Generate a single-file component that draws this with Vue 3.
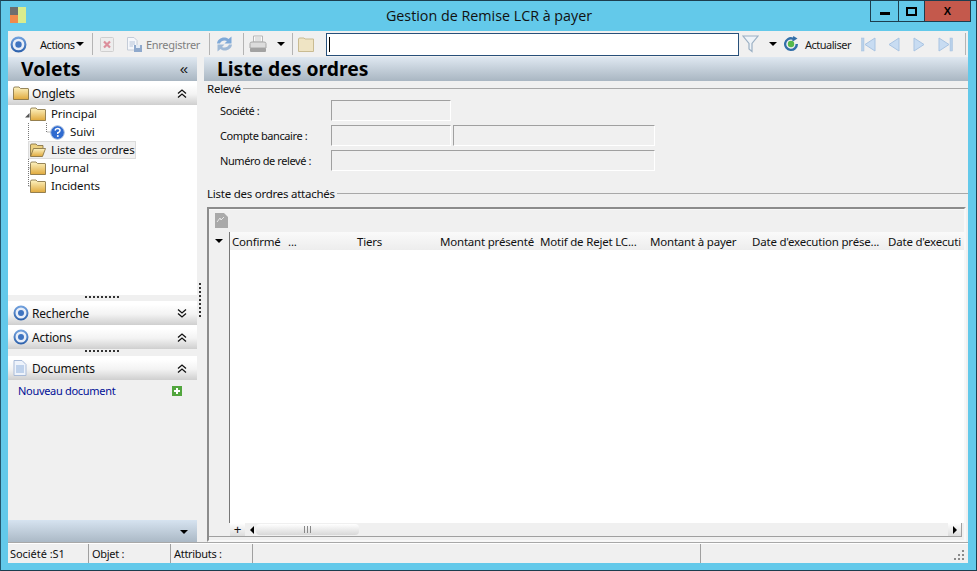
<script setup>
const headers = [
  { t: 'Confirmé', w: 54 }, { t: '...', w: 67 }, { t: 'Tiers', w: 81 },
  { t: 'Montant présenté', w: 98 }, { t: 'Motif de Rejet LC...', w: 108 },
  { t: 'Montant à payer', w: 100 }, { t: "Date d'execution prése...", w: 134 }, { t: "Date d'executi", w: 80 }
]
</script>

<template>
  <div class="window">
    <svg width="0" height="0" class="defs">
      <defs>
        <linearGradient id="fold" x1="0" y1="0" x2="0" y2="1"><stop offset="0" stop-color="#fdf3c2"/><stop offset="1" stop-color="#e0a93c"/></linearGradient>
        <linearGradient id="ring" x1="0" y1="0" x2="0" y2="1"><stop offset="0" stop-color="#6f9fdc"/><stop offset="1" stop-color="#2f63ad"/></linearGradient>
        <symbol id="folder" viewBox="0 0 16 14"><path d="M.5 2.500Q.5 1 2 1H6L7.500 2.500H15Q15.500 2.500 15.500 3V13.500H.5Z" fill="url(#fold)" stroke="#7d6a3a" stroke-width=".8"/></symbol>
        <symbol id="open" viewBox="0 0 16 14"><path d="M.5 13V2Q.5 1 2 1H6L7.500 2.500H13V5" fill="#ecd080" stroke="#7d6a3a" stroke-width=".8"/><path d="M.5 13.500L3.500 5.500H15.500L12.500 13.500Z" fill="url(#fold)" stroke="#7d6a3a" stroke-width=".8"/></symbol>
        <symbol id="target" viewBox="0 0 16 16"><circle cx="8" cy="8" r="6.500" fill="#e8eef8" stroke="url(#ring)" stroke-width="2"/><circle cx="8" cy="8" r="3" fill="#3f74c0"/></symbol>
      </defs>
    </svg>

    <header class="titlebar">
      <svg class="logo" width="17" height="16" viewBox="0 0 17 16"><rect width="8" height="8" fill="#6e6e6e"/><rect y="8" width="8" height="8" fill="#f08a4b"/><rect x="8" width="8" height="16" fill="#d9ec8d"/></svg>
      <span class="title">Gestion de Remise LCR à payer</span>
      <div class="controls">
        <div class="ctl min"><i></i></div>
        <div class="ctl max"><i></i></div>
        <div class="ctl close">X</div>
      </div>
    </header>

    <div class="frame">
      <div class="toolbar">
        <svg class="t-target" width="17" height="17"><use href="#target"/></svg>
        <span class="t-actions">Actions</span><span class="caret c1"></span>
        <span class="sep s1"></span>
        <svg class="t-del" width="14" height="15" viewBox="0 0 14 15"><rect x=".5" y=".5" width="13" height="14" rx="1" fill="#ededed" stroke="#cfcfcf"/><path d="M4 4.500L10 10.500M10 4.500L4 10.500" stroke="#dc8f9c" stroke-width="2.200"/></svg>
        <svg class="t-save" width="17" height="17" viewBox="0 0 17 17"><path d="M1.500 1.500H8L11 4.500V14H1.500Z" fill="#f5f7fb" stroke="#c4ccd8"/><path d="M3.500 6H9M3.500 8H9M3.500 10H7" stroke="#b5c3d8"/><rect x="8" y="9" width="8" height="7" fill="#8fa9cc"/><rect x="10" y="9" width="4" height="3" fill="#e3ebf5"/></svg>
        <span class="t-label gray">Enregistrer</span>
        <span class="sep s2"></span>
        <svg class="t-sync" width="17" height="18" viewBox="0 0 17 18"><path d="M1 8.500C1.500 3.500 8 .5 12.500 4L15.500 1.500V8.500H8.500L11 6C8 4.500 5 6 4 8.500Z" fill="#7fa9d8"/><path d="M16 9.500C15.500 14.500 9 17.500 4.500 14L1.500 16.500V9.500H8.500L6 12C9 13.500 12 12 13 9.500Z" fill="#9fb9d6"/></svg>
        <span class="sep s3"></span>
        <svg class="t-print" width="18" height="18" viewBox="0 0 18 18"><path d="M4.500 1H13.500V7H4.500Z" fill="#fafafa" stroke="#b5b5b5"/><path d="M6 3H12M6 5H12" stroke="#c8c8c8"/><path d="M1 8.500Q1 7 3 7H15Q17 7 17 8.500V13H1Z" fill="#dcdcdc" stroke="#a8a8a8"/><rect x="1" y="13" width="16" height="4" rx="1" fill="#a2a2a2"/></svg>
        <span class="caret c2"></span>
        <span class="sep s4"></span>
        <svg class="t-folder" width="16" height="15" viewBox="0 0 16 15"><path d="M.5 2Q.5 1 2 1H6L7 2H15.500V14.500H.5Z" fill="#efe4c4" stroke="#c9bb92"/></svg>
        <div class="search"><span class="cursor"></span></div>
        <svg class="t-filter" width="17" height="18" viewBox="0 0 17 18"><path d="M1 1H16L10 8.500V16.500L7 14V8.500Z" fill="#eef3f8" stroke="#9bb0c4" stroke-width="1.200"/></svg>
        <span class="caret c3"></span>
        <svg class="t-refresh" width="16" height="16" viewBox="0 0 16 16"><path d="M10 1.400A7 7 0 1 0 15 8H12.500A4.600 4.600 0 1 1 9.500 3.800L9 6L14.500 2.500L10.300 0Z" fill="#326fa8"/><circle cx="8" cy="8" r="3.200" fill="#55b84a"/></svg>
        <span class="t-label refresh">Actualiser</span>
        <svg class="nav n1" width="15" height="15" viewBox="0 0 15 15"><rect x=".5" y="1" width="2.500" height="13" fill="#b8d0ea" stroke="#a3c0de" stroke-width=".5"/><path d="M14 1V14L4 7.500Z" fill="#c8dcf2" stroke="#a9c4e2"/></svg>
        <svg class="nav n2" width="12" height="15" viewBox="0 0 12 15"><path d="M11 1V14L1 7.500Z" fill="#c8dcf2" stroke="#a9c4e2"/></svg>
        <svg class="nav n3" width="12" height="15" viewBox="0 0 12 15"><path d="M1 1V14L11 7.500Z" fill="#c8dcf2" stroke="#a9c4e2"/></svg>
        <svg class="nav n4" width="15" height="15" viewBox="0 0 15 15"><rect x="12" y="1" width="2.500" height="13" fill="#b8d0ea" stroke="#a3c0de" stroke-width=".5"/><path d="M1 1V14L11 7.500Z" fill="#c8dcf2" stroke="#a9c4e2"/></svg>
        <span class="sep s5"></span>
      </div>

      <div class="main">
        <aside class="side">
          <div class="band volets"><b>Volets</b><span class="chev">«</span></div>
          <div class="head">
            <svg width="16" height="14"><use href="#folder"/></svg><span>Onglets</span>
            <svg class="dbl" width="10" height="9" viewBox="0 0 10 9"><path d="M1 4.500L5 1L9 4.500M1 8.500L5 5L9 8.500" fill="none" stroke="#111" stroke-width="1.300"/></svg>
          </div>
          <div class="tree">
            <svg class="lines" width="60" height="90"><path d="M20.500 18V81M20.500 45H30M20.500 63H30M20.500 81H30M38.500 18V27H50M24 9H29" fill="none" stroke="#777" stroke-dasharray="1 1"/><path d="M17 12.500L21.500 12.500L21.500 8Z" fill="#555"/></svg>
            <div class="node l1"><svg width="16" height="14"><use href="#folder"/></svg><span>Principal</span></div>
            <div class="node l2">
              <svg width="15" height="15" viewBox="0 0 15 15"><circle cx="7.500" cy="7.500" r="6.800" fill="#2f6bd0" stroke="#a9bedf"/><path d="M5 5.500Q5.500 3.500 7.500 3.500Q10 3.500 10 5.500Q10 7 7.800 7.800V9" fill="none" stroke="#fff" stroke-width="1.500"/><circle cx="7.800" cy="11" r="1" fill="#fff"/></svg>
              <span>Suivi</span>
            </div>
            <div class="node l1"><div class="selbox"><svg width="16" height="14"><use href="#open"/></svg><span>Liste des ordres</span></div></div>
            <div class="node l1"><svg width="16" height="14"><use href="#folder"/></svg><span>Journal</span></div>
            <div class="node l1"><svg width="16" height="14"><use href="#folder"/></svg><span>Incidents</span></div>
          </div>
          <div class="grip"></div>
          <div class="head">
            <svg width="16" height="16"><use href="#target"/></svg><span>Recherche</span>
            <svg class="dbl" width="10" height="9" viewBox="0 0 10 9"><path d="M1 .5L5 4L9 .5M1 4.500L5 8L9 4.500" fill="none" stroke="#111" stroke-width="1.300"/></svg>
          </div>
          <div class="head">
            <svg width="16" height="16"><use href="#target"/></svg><span>Actions</span>
            <svg class="dbl" width="10" height="9" viewBox="0 0 10 9"><path d="M1 4.500L5 1L9 4.500M1 8.500L5 5L9 8.500" fill="none" stroke="#111" stroke-width="1.300"/></svg>
          </div>
          <div class="grip g2"></div>
          <div class="head">
            <svg width="14" height="16" viewBox="0 0 14 16"><path d="M1 .5H9L13 4.500V15.500H1Z" fill="#eef3fb" stroke="#a9bbd8"/><path d="M3 6H11M3 8H11M3 10H11M3 12H11" stroke="#8fb0dc"/></svg><span>Documents</span>
            <svg class="dbl" width="10" height="9" viewBox="0 0 10 9"><path d="M1 4.500L5 1L9 4.500M1 8.500L5 5L9 8.500" fill="none" stroke="#111" stroke-width="1.300"/></svg>
          </div>
          <div class="docs">
            <span class="link">Nouveau document</span>
            <svg width="10" height="10" viewBox="0 0 10 10"><rect width="10" height="10" fill="#52a63e"/><path d="M5 2V8M2 5H8" stroke="#fff" stroke-width="2"/></svg>
          </div>
          <div class="side-foot"><span class="caret"></span></div>
        </aside>

        <div class="splitter"><span class="vgrip"></span></div>

        <section class="content">
          <div class="band listhead"><b>Liste des ordres</b></div>
          <div class="legend first"><span>Relevé</span><i></i></div>
          <div class="form">
            <div class="row"><label>Société :</label><div class="field f1"></div></div>
            <div class="row"><label>Compte bancaire :</label><div class="field f1"></div><div class="field f2"></div></div>
            <div class="row"><label>Numéro de relevé :</label><div class="field f3"></div></div>
          </div>
          <div class="legend second"><span>Liste des ordres attachés</span><i></i></div>
          <div class="grid">
            <div class="grid-tools">
              <svg width="13" height="15" viewBox="0 0 13 15"><path d="M0 0H9L13 4V15H0Z" fill="#a9a9a9"/><path d="M2 9L5 5L6 7L9 4" stroke="#e8e8e8" fill="none"/></svg>
            </div>
            <div class="grid-head">
              <div class="corner"><span class="caret"></span></div>
              <span v-for="h in headers" :key="h.t" class="col" :style="{ width: h.w + 'px' }">{{ h.t }}</span>
            </div>
            <div class="grid-body"><div class="gutter"></div><div class="rows"></div></div>
            <div class="scroll">
              <span class="plus">+</span>
              <span class="arrow left"></span>
              <div class="thumb"><em></em></div>
              <div class="track"></div>
              <span class="arrow-box"><span class="arrow right"></span></span>
            </div>
          </div>
        </section>
      </div>

      <footer class="status">
        <span class="cell c-a">Société :S1</span>
        <span class="cell c-b">Objet :</span>
        <span class="cell c-c">Attributs :</span>
        <span class="cell c-d"></span>
        <svg class="resize" width="12" height="12" viewBox="0 0 12 12"><path d="M9 1h2v2H9zM5 5h2v2H5zM9 5h2v2H9zM1 9h2v2H1zM5 9h2v2H5zM9 9h2v2H9z" fill="#8a8a8a"/></svg>
      </footer>
    </div>
  </div>
</template>

<style scoped>
.window { width: 977px; height: 571px; box-sizing: border-box; background: #63c9ea; border: 1px solid #1c3d4e; border-left-color: #24566d; display: flex; flex-direction: column; font: 12px "Noto Sans", "Liberation Sans", sans-serif; color: #111; overflow: hidden; position: relative; }
.defs { position: absolute; }
.titlebar { height: 30px; flex: none; position: relative; display: flex; justify-content: center; }
.logo { position: absolute; left: 9px; top: 6px; }
.title { font: 14.3px/30px "Open Sans", sans-serif; color: #111; margin-left: 1px; }
.controls { position: absolute; right: 5px; top: 0; display: flex; height: 21px; border: 1px solid #1c3d4e; border-top: 0; box-sizing: border-box; }
.ctl { display: flex; align-items: center; justify-content: center; border-right: 1px solid #1c3d4e; }
.min { width: 27px; }
.min i { width: 10px; height: 3px; background: #000; margin-top: 5px; }
.max { width: 25px; }
.max i { width: 7px; height: 5px; border: 2px solid #000; }
.close { width: 45px; border: 0; background: #c4594c; font: bold 11px "Liberation Sans", sans-serif; color: #000; }
.frame { flex: 1; display: flex; flex-direction: column; margin: 0 8px 7px 7px; background: #f0f0f0; }
.toolbar { height: 26px; flex: none; position: relative; display: flex; align-items: center; }
.toolbar > * { flex: none; }
.caret { display: inline-block; width: 0; height: 0; border: 4px solid transparent; border-top-color: #000; border-bottom: 0; }
.sep { width: 1px; height: 22px; background: #b4b4b4; }
.t-target { margin-left: 2px; }
.t-actions { margin-left: 13px; width: 35px; font-size: 11px; letter-spacing: -.45px; white-space: nowrap; }
.c1 { margin-left: 1px; }
.s1 { margin-left: 8px; }
.t-del { margin-left: 7px; }
.t-save { margin-left: 12px; }
.t-label { font-size: 11px; white-space: nowrap; }
.gray { color: #7f7f7f; margin-left: 3px; width: 53px; letter-spacing: -.3px; }
.s2 { margin-left: 10px; }
.t-sync { margin-left: 6px; }
.s3 { margin-left: 10px; }
.t-print { margin-left: 5px; }
.c2 { margin-left: 10px; }
.s4 { margin-left: 7px; }
.t-folder { margin-left: 5px; }
.search { width: 413px; height: 23px; box-sizing: border-box; margin-left: 12px; border: 1px solid #27507a; background: #fff; position: relative; }
.cursor { position: absolute; left: 2px; top: 3px; width: 1px; height: 15px; background: #000; }
.t-filter { margin-left: 3px; }
.c3 { margin-left: 10px; }
.t-refresh { margin-left: 6px; }
.refresh { margin-left: 6px; width: 46px; color: #1a1a1a; letter-spacing: -.5px; }
.n1 { margin-left: 10px; }
.n2 { margin-left: 12px; }
.n3 { margin-left: 13px; }
.n4 { margin-left: 13px; }
.s5 { margin-left: 12px; }
.main { flex: 1; display: flex; min-height: 0; }
.side { width: 189px; flex: none; display: flex; flex-direction: column; }
.band { height: 24px; flex: none; background: linear-gradient(#dfe8f1, #a9b6c2); display: flex; align-items: center; }
.band b { font: bold 19.3px/24px "Noto Sans", sans-serif; color: #000; }
.volets { padding-left: 13px; justify-content: space-between; padding-right: 9px; }
.chev { font: 15px/20px "Liberation Sans", sans-serif; }
.head { height: 24px; flex: none; display: flex; align-items: center; padding-left: 5px; background: linear-gradient(#fff 15%, #f3f3f3 55%, #cfcfcf); position: relative; font-size: 12px; letter-spacing: -.2px; }
.head > span { margin-left: 4px; position: absolute; left: 20px; }
.dbl { position: absolute; right: 10px; top: 8px; }
.tree { height: 190px; flex: none; background: #fff; position: relative; font-size: 11.5px; letter-spacing: -.1px; }
.lines { position: absolute; left: 0; top: 0; }
.node { height: 18px; display: flex; align-items: center; position: relative; }
.node span { margin-left: 5px; padding-bottom: 2px; }
.l1 { padding-left: 22px; }
.l2 { padding-left: 42px; }
.selbox { display: flex; align-items: center; height: 18px; width: 108px; box-sizing: border-box; margin-left: -2px; padding-left: 2px; background: #f0f0f0; outline: 1px solid #dcdcdc; outline-offset: -1px; }
.grip { height: 6px; flex: none; background: #f0f0f0; position: relative; }
.grip::after { content: ""; position: absolute; left: 77px; top: 1px; width: 35px; height: 2px; background: repeating-linear-gradient(90deg, #333 0 2px, transparent 2px 4px); }
.g2 { height: 7px; }
.docs { height: 140px; flex: none; display: flex; align-items: flex-start; justify-content: space-between; padding: 3px 15px 0 10px; box-sizing: border-box; }
.link { color: #000f96; font-size: 11px; letter-spacing: -.3px; }
.docs svg { margin-top: 3px; }
.side-foot { flex: 1; background: linear-gradient(#d6e3f0, #a9b7c4); display: flex; align-items: center; justify-content: flex-end; padding-right: 9px; }
.splitter { width: 7px; flex: none; position: relative; }
.vgrip { position: absolute; left: 2px; top: 226px; width: 2px; height: 34px; background: repeating-linear-gradient(#333 0 2px, transparent 2px 4px); }
.content { flex: 1; min-width: 0; display: flex; flex-direction: column; }
.listhead { padding-left: 13px; }
.legend { display: flex; align-items: center; height: 14px; font-size: 11.5px; letter-spacing: -.25px; padding-left: 3px; flex: none; }
.legend span { padding-right: 2px; }
.legend i { flex: 1; height: 1px; background: #a8a8a8; }
.form { padding: 5px 0 0 16px; flex: none; }
.row { display: flex; height: 25px; font-size: 11px; letter-spacing: -.4px; }
.row label { width: 111px; line-height: 21px; flex: none; }
.field { box-sizing: border-box; height: 21px; border: 1px solid #fff; border-top-color: #a0a0a0; border-left-color: #a0a0a0; }
.f1 { width: 120px; }
.f2 { width: 202px; margin-left: 2px; }
.f3 { width: 324px; }
.second { margin-top: 11px; }
.grid { margin: 7px 2px 1px 3px; flex: 1; min-height: 0; display: flex; flex-direction: column; border: 2px solid #8c8c8c; border-right-color: #f8f8f8; border-bottom-color: #f8f8f8; box-sizing: border-box; }
.grid-tools { height: 23px; flex: none; padding: 3px 0 0 6px; box-sizing: border-box; border-top: 1px solid #f8f8f8; }
.grid-head { height: 18px; flex: none; display: flex; align-items: center; background: linear-gradient(#fafafa, #ededed); font-size: 11.5px; white-space: nowrap; overflow: hidden; letter-spacing: -.2px; }
.corner { width: 20px; height: 18px; flex: none; display: flex; align-items: center; justify-content: center; background: #f0f0f0; border-right: 1px solid #777; }
.col { flex: none; margin-left: 2px; }
.grid-body { flex: 1; display: flex; min-height: 0; }
.gutter { width: 20px; background: #f0f0f0; border-right: 1px solid #777; }
.rows { flex: 1; background: #fff; }
.scroll { height: 14px; box-sizing: border-box; flex: none; display: flex; align-items: center; border-bottom: 1px solid #a0a0a0; background: #f0f0f0; position: relative; margin: 0 2px 3px 0; }
.plus { width: 15px; margin-left: 21px; font: 13px/13px "Liberation Sans", sans-serif; text-align: center; flex: none; background: linear-gradient(#fff, #ddd); }
.arrow { width: 0; height: 0; border: 4px solid transparent; flex: none; }
.left { border-right-color: #000; border-left: 0; margin-left: 5px; }
.right { border-left-color: #000; border-right: 0; }
.thumb { width: 103px; height: 11px; margin-left: 2px; background: linear-gradient(#fff, #d8d8d8); border-radius: 4px; display: flex; justify-content: center; align-items: center; flex: none; }
.thumb em { width: 7px; height: 7px; background: repeating-linear-gradient(90deg, #888 0 1px, transparent 1px 3px); }
.track { flex: 1; }
.arrow-box { width: 13px; height: 13px; display: flex; align-items: center; justify-content: center; background: linear-gradient(#fff, #ddd); border-right: 1px solid #a0a0a0; flex: none; }
.status { height: 19px; flex: none; display: flex; align-items: center; border-top: 1px solid #fff; box-shadow: 0 -1px 0 #a8a8a8; position: relative; font-size: 11px; letter-spacing: -.3px; }
.cell { height: 100%; box-sizing: border-box; border-right: 1px solid #a0a0a0; padding: 0 0 0 2px; line-height: 19px; flex: none; overflow: hidden; white-space: nowrap; }
.c-a { width: 81px; letter-spacing: -.05px; }
.c-b { width: 82px; padding-left: 3px; }
.c-c { width: 82px; padding-left: 3px; }
.c-d { width: 448px; }
.resize { position: absolute; right: 3px; bottom: 2px; }
</style>

<style>
html, body { margin: 0; background: #63c9ea; }
</style>
